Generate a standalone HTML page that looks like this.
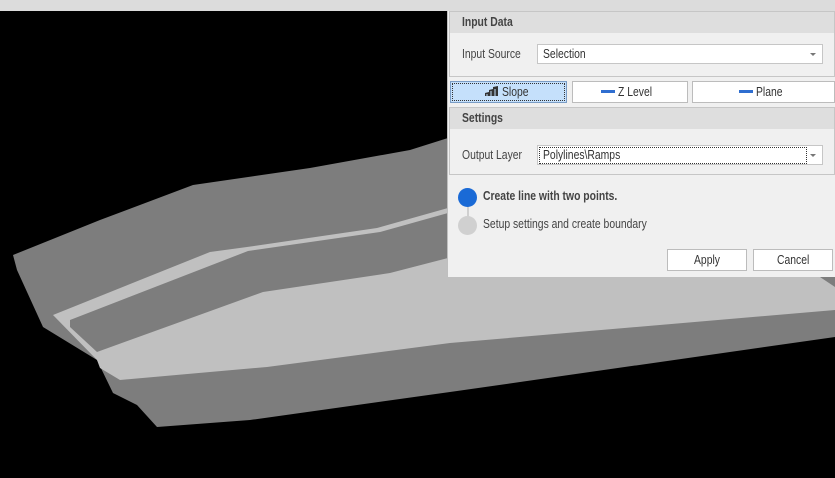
<!DOCTYPE html>
<html><head><meta charset="utf-8"><style>
*{margin:0;padding:0;box-sizing:border-box}
body{width:835px;height:478px;background:#000;position:relative;overflow:hidden;font-family:"Liberation Sans",sans-serif;font-size:12.5px;color:#333}
.abs{position:absolute}
.n{display:inline-block;transform:scaleX(.83);transform-origin:left center;white-space:nowrap}
.c{transform-origin:center}
.top{left:0;top:0;width:835px;height:11px;background:#dcdcdc}
.panel{left:447px;top:11px;width:388px;height:266px;background:#f0f0f0;border-left:1px solid #bfbfbf}
.grp{position:absolute;left:1px;width:386px;border:1px solid #c6c6c6;background:#f0f0f0}
.hdr{height:21px;background:#dedede;font-weight:bold;padding:3px 0 0 12px;color:#444}
.lbl{position:absolute;color:#444}
.combo{position:absolute;background:#fff;border:1px solid #c6c6c6;height:20px;padding:2px 0 0 5px}
.arr{position:absolute;right:6px;top:8px;width:0;height:0;border-left:3px solid transparent;border-right:3px solid transparent;border-top:3px solid #777}
.btn{position:absolute;background:#fff;border:1px solid #bcbcbc;height:22px;text-align:center;padding-top:3px;color:#333}
.dash{display:inline-block;width:14px;height:3px;background:#2f6ed0;vertical-align:middle;margin-right:3px;position:relative;top:-1px}
</style></head><body>
<svg class="abs" style="left:0;top:0" width="835" height="478">
<polygon fill="#7d7d7d" points="448,138 410,150 310,168 193,185 100,220 13,255 17,270 43,327 97,360 113,393 137,405 157,427 250,420 450,392 835,337 835,277 448,277"/>
<polygon fill="#c0c0c0" points="53,315 210,252 247,247 377,228 448,208 448,277 820,277 835,287 835,310 450,343 267,367 120,380 100,368 97,360"/>
<polygon fill="#7d7d7d" points="70,320 248,251 380,232 448,213 448,258 390,273 263,292 180,322 97,352 70,327"/>
</svg>
<div class="abs top"></div>
<div class="abs panel">
  <div class="grp" style="top:0;height:66px">
    <div class="hdr"><span class="n">Input Data</span></div>
    <div class="lbl" style="left:12px;top:35px"><span class="n">Input Source</span></div>
    <div class="combo" style="left:87px;top:32px;width:286px"><span class="n">Selection</span><div class="arr"></div></div>
  </div>
  <div class="btn" style="left:2px;top:70px;width:117px;background:#c5e0fb;border:1px solid #7a9cc4;outline:1px dotted #333;outline-offset:-3px">
    <svg width="18" height="12" style="vertical-align:middle;position:relative;top:-2px" viewBox="0 0 18 12"><path d="M1 11 L1 8 L5 7 L5 5 L9 4 L9 2 L14 1 L14 11 Z" fill="#333"/><path d="M3 11V9M7 11V6M11 11V4" stroke="#c5e0fb" stroke-width="1"/></svg><span class="n" style="transform-origin:left">Slope</span></div>
  <div class="btn" style="left:124px;top:70px;width:116px"><span class="dash"></span><span class="n">Z Level</span></div>
  <div class="btn" style="left:244px;top:70px;width:143px"><span class="dash"></span><span class="n">Plane</span></div>
  <div class="grp" style="top:96px;height:68px">
    <div class="hdr"><span class="n">Settings</span></div>
    <div class="lbl" style="left:12px;top:40px"><span class="n">Output Layer</span></div>
    <div class="combo" style="left:87px;top:37px;width:286px"><span style="outline:1px dotted #333;display:inline-block;width:266px;height:15px;margin-left:-3px;padding-left:3px;line-height:14px"><span class="n">Polylines\Ramps</span></span><div class="arr"></div></div>
  </div>
  <div class="abs" style="left:19px;top:192px;width:2px;height:22px;background:#d0d0d0"></div>
  <div class="abs" style="left:10px;top:177px;width:19px;height:19px;border-radius:50%;background:#1a6ad6"></div>
  <div class="abs" style="left:10px;top:205px;width:19px;height:19px;border-radius:50%;background:#d0d0d0"></div>
  <div class="lbl" style="left:35px;top:178px;font-weight:bold"><span class="n">Create line with two points.</span></div>
  <div class="lbl" style="left:35px;top:206px"><span class="n">Setup settings and create boundary</span></div>
  <div class="btn" style="left:219px;top:238px;width:80px"><span class="n" style="margin-right:-5px">Apply</span></div>
  <div class="btn" style="left:305px;top:238px;width:80px"><span class="n" style="margin-right:-6px">Cancel</span></div>
</div>
</body></html>
